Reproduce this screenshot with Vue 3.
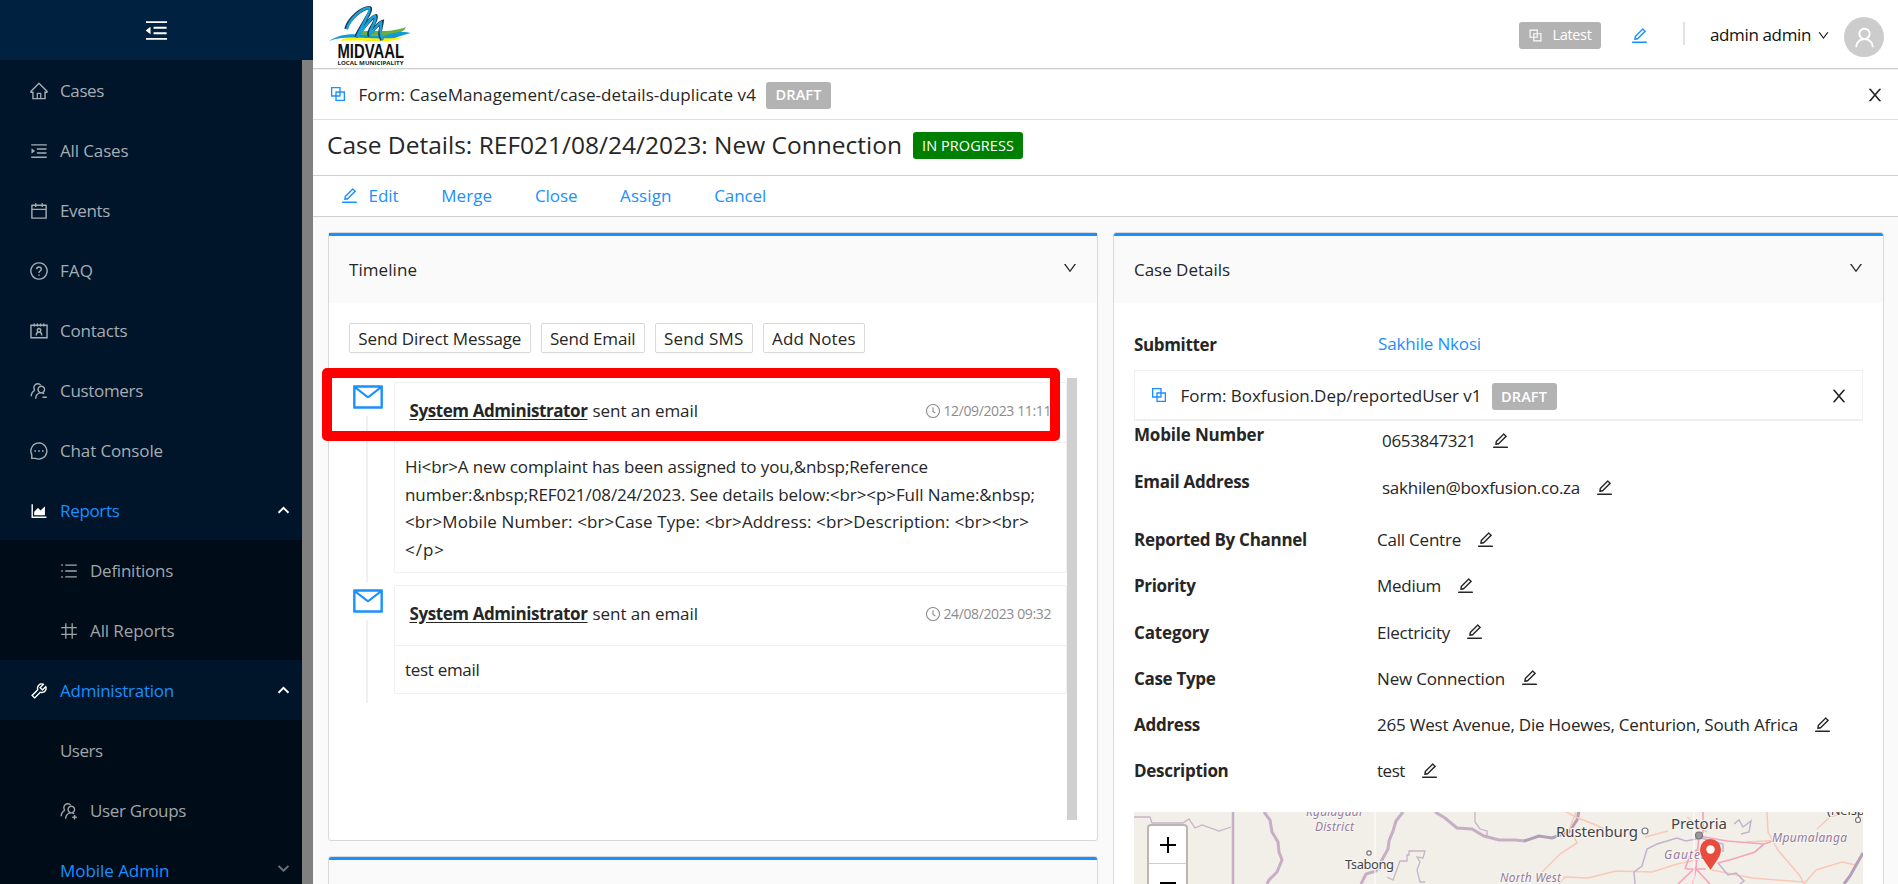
<script setup>
import { h } from 'vue'

const paths = {
  fold: 'M408 442h480c4.4 0 8-3.6 8-8v-56c0-4.4-3.6-8-8-8H408c-4.4 0-8 3.6-8 8v56c0 4.4 3.6 8 8 8zm-8 204c0 4.4 3.6 8 8 8h480c4.4 0 8-3.6 8-8v-56c0-4.4-3.6-8-8-8H408c-4.4 0-8 3.6-8 8v56zm504-486H120c-4.4 0-8 3.6-8 8v56c0 4.4 3.6 8 8 8h784c4.4 0 8-3.6 8-8v-56c0-4.4-3.6-8-8-8zm0 632H120c-4.4 0-8 3.6-8 8v56c0 4.4 3.6 8 8 8h784c4.4 0 8-3.6 8-8v-56c0-4.4-3.6-8-8-8zM115.4 518.9L271.7 642c5.8 4.6 14.4.5 14.4-6.9V388.9c0-7.4-8.5-11.5-14.4-6.9L115.4 505.1a8.74 8.74 0 000 13.8z',
  unfold: 'M408 442h480c4.4 0 8-3.6 8-8v-56c0-4.4-3.6-8-8-8H408c-4.4 0-8 3.6-8 8v56c0 4.4 3.6 8 8 8zm-8 204c0 4.4 3.6 8 8 8h480c4.4 0 8-3.6 8-8v-56c0-4.4-3.6-8-8-8H408c-4.4 0-8 3.6-8 8v56zm504-486H120c-4.4 0-8 3.6-8 8v56c0 4.4 3.6 8 8 8h784c4.4 0 8-3.6 8-8v-56c0-4.4-3.6-8-8-8zm0 632H120c-4.4 0-8 3.6-8 8v56c0 4.4 3.6 8 8 8h784c4.4 0 8-3.6 8-8v-56c0-4.4-3.6-8-8-8zM142.4 642.1L298.7 519a8.84 8.84 0 000-13.9L142.4 381.9c-5.8-4.6-14.4-.5-14.4 6.9v246.3a8.9 8.9 0 0014.4 7z',
  home: 'M946.5 505L560.1 118.8l-25.9-25.9a31.5 31.5 0 00-44.4 0L77.5 505a63.9 63.9 0 00-18.8 46c.4 35.2 29.7 63.3 64.9 63.3h42.5V940h691.8V614.3h43.4c17.1 0 33.2-6.7 45.3-18.8a63.6 63.6 0 0018.7-45.3c0-17-6.7-33.1-18.8-45.2zM568 868H456V664h112v204zm217.9-325.7V868H632V640c0-22.1-17.9-40-40-40H432c-22.1 0-40 17.9-40 40v228H238.1V542.3h-96l370-369.7 23.1 23.1L882 542.3h-96.1z',
  calendar: 'M880 184H712v-64c0-4.4-3.6-8-8-8h-56c-4.4 0-8 3.6-8 8v64H384v-64c0-4.4-3.6-8-8-8h-56c-4.4 0-8 3.6-8 8v64H144c-17.7 0-32 14.3-32 32v664c0 17.7 14.3 32 32 32h736c17.7 0 32-14.3 32-32V216c0-17.7-14.3-32-32-32zm-40 656H184V460h656v380zM184 392V256h128v48c0 4.4 3.6 8 8 8h56c4.4 0 8-3.6 8-8v-48h256v48c0 4.4 3.6 8 8 8h56c4.4 0 8-3.6 8-8v-48h128v136H184z',
  chart: 'M888 792H200V168c0-4.4-3.6-8-8-8h-56c-4.4 0-8 3.6-8 8v688c0 4.4 3.6 8 8 8h752c4.4 0 8-3.6 8-8v-56c0-4.4-3.6-8-8-8zm-616-64h536c4.4 0 8-3.6 8-8V284c0-7.2-8.7-10.7-13.7-5.7L592 488.6l-125.4-124a8.03 8.03 0 00-11.3 0l-189 189.6a7.87 7.87 0 00-2.3 5.6V720c0 4.4 3.6 8 8 8z',
  tool: 'M876.6 239.5c-.5-.9-1.2-1.8-2-2.5-5-5-13.1-5-18.1 0L684.2 409.3l-67.9-67.9L788.7 169c.8-.8 1.4-1.6 2-2.5 3.6-6.1 1.6-13.9-4.5-17.5-98.2-58-226.8-44.7-311.3 39.7-67 67-89.2 162-66.5 247.4l-293 293c-3 3-2.8 7.9.3 11l169.7 169.7c3.1 3.1 8.1 3.3 11 .3l292.9-292.9c85.5 22.8 180.5.7 247.6-66.4 84.4-84.5 97.7-213.1 39.7-311.3zM786 499.8c-58.1 58.1-145.3 69.3-214.6 33.6l-8.8 8.8-.1-.1-274 274.1-79.2-79.2 230.1-230.1s0 .1.1.1l52.8-52.8c-35.7-69.3-24.5-156.5 33.6-214.6a184.2 184.2 0 01144-53.5L537 318.9a32.05 32.05 0 000 45.3l124.5 124.5a32.05 32.05 0 0045.3 0l132.8-132.8c3.7 51.8-14.4 104.8-53.6 143.9z',
  edit: 'M257.7 752c2 0 4-.2 6-.5L431.9 722c2-.4 3.9-1.3 5.3-2.8l423.9-423.9a9.96 9.96 0 000-14.1L694.9 114.9c-1.9-1.9-4.4-2.9-7.1-2.9s-5.2 1-7.1 2.9L256.8 538.8c-1.5 1.5-2.4 3.3-2.8 5.3l-29.5 168.2a33.5 33.5 0 009.4 29.8c6.6 6.4 14.9 9.9 23.8 9.9zm67.4-174.4L687.8 215l73.3 73.3-362.7 362.6-88.9 15.7 15.6-89zM880 836H144c-17.7 0-32 14.3-32 32v36c0 4.4 3.6 8 8 8h784c4.4 0 8-3.6 8-8v-36c0-17.7-14.3-32-32-32z',
  block: 'M856 376H648V168c0-8.8-7.2-16-16-16H168c-8.8 0-16 7.2-16 16v464c0 8.8 7.2 16 16 16h208v208c0 8.8 7.2 16 16 16h464c8.8 0 16-7.2 16-16V392c0-8.8-7.2-16-16-16zm-480 16v188H220V220h360v156H392c-8.8 0-16 7.2-16 16zm204 52v136H444V444h136zm224 360H444V648h188c8.8 0 16-7.2 16-16V444h156v360z',
  down: 'M884 256h-75c-5.1 0-9.9 2.5-12.9 6.6L512 654.2 227.9 262.6c-3-4.1-7.8-6.6-12.9-6.6h-75c-6.5 0-10.3 7.4-6.5 12.7l352.6 486.1c12.8 17.6 39 17.6 51.7 0l352.6-486.1c3.9-5.3.1-12.7-6.4-12.7z',
  close: 'M563.8 512l262.5-312.9c4.4-5.2.7-13.1-6.1-13.1h-79.8c-4.7 0-9.2 2.1-12.3 5.7L511.6 449.8 295.1 191.7c-3-3.6-7.5-5.7-12.3-5.7H203c-6.8 0-10.5 7.9-6.1 13.1L459.4 512 196.9 824.9A7.95 7.95 0 00203 838h79.8c4.7 0 9.2-2.1 12.3-5.7l216.5-258.1 216.5 258.1c3 3.6 7.5 5.7 12.3 5.7h79.8c6.8 0 10.5-7.9 6.1-13.1L563.8 512z',
  mail: 'M928 160H96c-17.7 0-32 14.3-32 32v640c0 17.7 14.3 32 32 32h832c17.7 0 32-14.3 32-32V192c0-17.7-14.3-32-32-32zm-40 110.8V792H136V270.8l-27.6-21.5 39.3-50.5 42.8 33.3h643.1l42.8-33.3 39.3 50.5-27.7 21.5zM833.6 232L512 482 190.4 232l-42.8-33.3-39.3 50.5 27.6 21.5 341.6 265.6a55.99 55.99 0 0068.7 0L888 270.8l27.6-21.5-39.3-50.5-42.7 33.2z',
  user: 'M858.5 763.6a374 374 0 00-80.6-119.5 375.63 375.63 0 00-119.5-80.6c-.4-.2-.8-.3-1.2-.5C719.5 518 760 444.7 760 362c0-137-111-248-248-248S264 225 264 362c0 82.7 40.5 156 102.8 201.1-.4.2-.8.3-1.2.5-44.8 18.9-85 46-119.5 80.6a375.63 375.63 0 00-80.6 119.5A371.7 371.7 0 00136 901.8a8 8 0 008 8.2h60c4.4 0 7.9-3.5 8-7.8 2-77.2 33-149.5 87.8-204.3 56.7-56.7 132-87.9 212.2-87.9s155.5 31.2 212.2 87.9C779 752.7 810 825 812 902.2c.1 4.4 3.6 7.8 8 7.8h60a8 8 0 008-8.2c-1-47.8-10.9-94.3-29.5-138.2zM512 534c-45.9 0-89.1-17.9-121.6-50.4S340 407.9 340 362c0-45.9 17.9-89.1 50.4-121.6S466.1 190 512 190s89.1 17.9 121.6 50.4S684 316.1 684 362c0 45.9-17.9 89.1-50.4 121.6S557.9 534 512 534z',
  list: 'M320 176h592v68H320zM320 478h592v68H320zM320 780h592v68H320zM112 168h80v80h-80zM112 472h80v80h-80zM112 776h80v80h-80z',
  number: 'M112 312h800v64H112zM112 648h800v64H112zM316 112h66v800h-66zM642 112h66v800h-66z',
}

const strokes = {
  question: 'M512 98a414 414 0 1 0 .1 0zM392 420c0-72 52-116 120-116s120 46 120 112c0 84-120 100-120 170v34M512 690v64',
  contacts: 'M100 216h824v640H100zM270 130v150M430 130v150M594 130v150M754 130v150M512 380a90 90 0 1 0 .1 0zM372 740c0-110 60-176 140-176s140 66 140 176',
  message: 'M512 98A414 414 0 0 0 142 698V890H330A414 414 0 1 0 512 98zM318 470v84M512 470v84M706 470v84M276 512h84M470 512h84M664 512h84',
  groupMinus: 'M300 480A185 185 0 1 1 600 210M110 780C120 620 190 530 300 480M630 270a168 168 0 1 0 .1 0zM340 910c10-170 120-300 290-300 60 0 110 15 150 45M690 830h220',
  groupPlus: 'M300 480A185 185 0 1 1 600 210M110 780C120 620 190 530 300 480M630 270a168 168 0 1 0 .1 0zM340 910c10-170 120-300 290-300 60 0 110 15 150 45M680 830h230M795 715v230',
  clock: 'M512 98a414 414 0 1 0 .1 0zM512 270v270l150 110',
  caretUp: 'M120 690L512 310L904 690',
  caretDown: 'M120 310L512 690L904 310',
}

const Icon = (props) =>
  h('svg', { class: 'icon', viewBox: '0 0 1024 1024' }, [
    paths[props.name]
      ? h('path', { d: paths[props.name], fill: 'currentColor' })
      : h('path', {
          d: strokes[props.name],
          fill: 'none',
          stroke: 'currentColor',
          'stroke-width': props.name.startsWith('caret') ? 150 : 72,
        }),
  ])
Icon.props = ['name']

// Tracks a single-line label so that it spans the given width.
const vFit = {
  mounted(el, { value }) {
    const gap = value - el.getBoundingClientRect().width
    el.style.letterSpacing = `${gap / el.textContent.length}px`
  },
}

const menu = [
  { icon: 'home', label: 'Cases', w: 44 },
  { icon: 'unfold', label: 'All Cases', w: 68.5 },
  { icon: 'calendar', label: 'Events', w: 50 },
  { icon: 'question', label: 'FAQ', w: 33 },
  { icon: 'contacts', label: 'Contacts', w: 67.5 },
  { icon: 'groupMinus', label: 'Customers', w: 83 },
  { icon: 'message', label: 'Chat Console', w: 103 },
  { icon: 'chart', label: 'Reports', w: 59.5, open: true },
  { icon: 'list', label: 'Definitions', w: 83, sub: true },
  { icon: 'number', label: 'All Reports', w: 84.5, sub: true },
  { icon: 'tool', label: 'Administration', w: 114, open: true },
  { label: 'Users', w: 42.5, sub: true, bare: true },
  { icon: 'groupPlus', label: 'User Groups', w: 96, sub: true },
  { label: 'Mobile Admin', w: 109.5, sub: true, bare: true, closed: true },
]

const actions = [
  { label: 'Edit', w: 30, icon: 'edit' },
  { label: 'Merge', w: 51 },
  { label: 'Close', w: 42.5 },
  { label: 'Assign', w: 51.5 },
  { label: 'Cancel', w: 52 },
]

const sends = [
  { label: 'Send Direct Message', w: 163 },
  { label: 'Send Email', w: 85.5 },
  { label: 'Send SMS', w: 79.5 },
  { label: 'Add Notes', w: 83.5 },
]

const mails = [
  {
    time: '12/09/2023 11:11',
    lines: [
      { t: 'Hi<br>A new complaint has been assigned to you,&nbsp;Reference', w: 523 },
      { t: 'number:&nbsp;REF021/08/24/2023. See details below:<br><p>Full Name:&nbsp;', w: 630 },
      { t: '<br>Mobile Number: <br>Case Type: <br>Address: <br>Description: <br><br>', w: 624 },
      { t: '</p>', w: 40 },
    ],
  },
  { time: '24/08/2023 09:32', lines: [{ t: 'test email', w: 74.5 }] },
]

const contact = [
  { label: 'Mobile Number', lw: 130, value: '0653847321', w: 94 },
  { label: 'Email Address', lw: 115.5, value: 'sakhilen@boxfusion.co.za', w: 198 },
]

const fields = [
  { label: 'Reported By Channel', lw: 173, value: 'Call Centre', w: 84 },
  { label: 'Priority', lw: 61.5, value: 'Medium', w: 64 },
  { label: 'Category', lw: 75, value: 'Electricity', w: 73 },
  { label: 'Case Type', lw: 81.5, value: 'New Connection', w: 128 },
  { label: 'Address', lw: 66, value: '265 West Avenue, Die Hoewes, Centurion, South Africa', w: 421 },
  { label: 'Description', lw: 94.5, value: 'test', w: 28 },
]
</script>

<template>
  <div class="page">
    <aside class="side">
      <div class="side-top"><Icon name="fold" /></div>
      <div class="side-body">
        <nav class="menu">
          <div
            v-for="m in menu"
            :key="m.label"
            class="item"
            :class="{ sub: m.sub, open: m.open, closed: m.closed, bare: m.bare }"
          >
            <Icon v-if="m.icon" :name="m.icon" />
            <span v-fit="m.w" class="t">{{ m.label }}</span>
            <span v-if="m.open || m.closed" class="caret">
              <Icon :name="m.open ? 'caretUp' : 'caretDown'" />
            </span>
          </div>
        </nav>
        <div class="side-scroll"></div>
      </div>
    </aside>

    <main class="main">
      <header class="top">
        <svg class="logo" viewBox="0 0 84 60" width="84" height="60">
          <path d="M27 34C42 29 55 36 78 28C75 36 58 38 34 36z" fill="#6aae3d" />
          <path d="M1 42C22 28 45 41 62 35C72 32 78 33 83 34C68 37 64 43 47 42C28 41 20 35 1 42z" fill="#0f9bd7" />
          <path d="M15 40C30 36 40 42 76 38C58 46 40 40 12 42z" fill="#fff100" />
          <path d="M18 30C21 19 35 8 42 9C45 11 32 28 28 38C36 28 43 18 48 17C50 21 40 31 41 35C46 31 49 25 54 23C53 30 50 35 54 41" fill="none" stroke="#163a52" stroke-width="3.6" />
          <path d="M19 30C22 19 35 8.500 41 9C44 11 33 28 29 38C37 29 43 17 47 17C50 21 41 31 42 35C47 31 49 25 53 23.500C53 30 51 35 55 41" fill="none" stroke="#1aa3dc" stroke-width="2.400" />
          <text x="9.500" y="58.500" class="logo-name" textLength="66.500" lengthAdjust="spacingAndGlyphs">MIDVAAL</text>
          <text x="9.500" y="65.500" class="logo-sub" textLength="66" lengthAdjust="spacingAndGlyphs">LOCAL MUNICIPALITY</text>
        </svg>
        <div class="top-right">
          <span class="tag latest"><Icon name="block" /><span v-fit="39" class="t">Latest</span></span>
          <Icon name="edit" class="blue top-edit" />
          <i class="rule"></i>
          <span v-fit="101" class="t admin">admin admin</span>
          <Icon name="down" class="top-down" />
          <span class="avatar"><Icon name="user" /></span>
        </div>
      </header>

      <div class="form-bar">
        <Icon name="block" class="blue" />
        <span v-fit="397.5" class="t name">Form: CaseManagement/case-details-duplicate v4</span>
        <span class="tag draft"><span v-fit="46" class="t">DRAFT</span></span>
        <Icon name="close" class="x" />
      </div>

      <div class="title-bar">
        <span v-fit="575" class="t title">Case Details: REF021/08/24/2023: New Connection</span>
        <span class="tag progress"><span v-fit="92" class="t">IN PROGRESS</span></span>
      </div>

      <div class="toolbar">
        <span v-for="a in actions" :key="a.label" class="action">
          <Icon v-if="a.icon" :name="a.icon" />
          <span v-fit="a.w" class="t">{{ a.label }}</span>
        </span>
      </div>

      <div class="content">
        <div class="col">
          <section class="panel timeline">
            <div class="panel-head"><span v-fit="68" class="t">Timeline</span><Icon name="down" /></div>
            <div class="panel-body">
              <div class="sends">
                <span v-for="s in sends" :key="s.label" class="btn"><span v-fit="s.w" class="t">{{ s.label }}</span></span>
              </div>
              <div class="feed">
                <div class="entries">
                  <div v-for="m in mails" :key="m.time" class="entry">
                    <div class="rail"><Icon name="mail" /><i></i></div>
                    <div class="mail">
                      <div class="mail-head">
                        <b v-fit="178" class="t">System Administrator</b>
                        <span v-fit="105.5" class="t sent">sent an email</span>
                        <Icon name="clock" />
                        <span v-fit="107.5" class="t time">{{ m.time }}</span>
                      </div>
                      <div class="mail-body">
                        <div v-for="l in m.lines" :key="l.t" class="line"><span v-fit="l.w" class="t">{{ l.t }}</span></div>
                      </div>
                    </div>
                  </div>
                </div>
                <div class="feed-scroll"></div>
                <div class="highlight"></div>
              </div>
            </div>
          </section>
          <section class="panel next"></section>
        </div>

        <section class="panel details">
          <div class="panel-head"><span v-fit="96" class="t">Case Details</span><Icon name="down" /></div>
          <div class="panel-body">
            <div class="row submitter">
              <b><span v-fit="82.5" class="t">Submitter</span></b>
              <span v-fit="103" class="t link">Sakhile Nkosi</span>
            </div>
            <div class="form-box">
              <Icon name="block" class="blue" />
              <span v-fit="301" class="t name">Form: Boxfusion.Dep/reportedUser v1</span>
              <span class="tag draft"><span v-fit="46" class="t">DRAFT</span></span>
              <Icon name="close" class="x" />
            </div>
            <div class="contact">
              <div v-for="f in contact" :key="f.label" class="row">
                <b><span v-fit="f.lw" class="t">{{ f.label }}</span></b>
                <span class="value"><span v-fit="f.w" class="t">{{ f.value }}</span><Icon name="edit" /></span>
              </div>
            </div>
            <div class="fields">
              <div v-for="f in fields" :key="f.label" class="row">
                <b><span v-fit="f.lw" class="t">{{ f.label }}</span></b>
                <span class="value"><span v-fit="f.w" class="t">{{ f.value }}</span><Icon name="edit" /></span>
              </div>
            </div>
            <div class="map">
              <svg viewBox="0 0 729 72" width="729" height="72">
                <rect width="729" height="72" fill="#f2efe9" />
                <g fill="none" stroke="#c9b3c9" stroke-width="1.300">
                  <path d="M0 5h16l2 6h31l6-4 6 9 7-3 17 6 12-4" />
                  <path d="M341 0v10l5 7 7 2v5" />
                  <path d="M253 65l6 3 7-19h7v-6h2v-4h16l-2 7-6-1 3 5-3 8 3 12h5" />
                </g>
                <g fill="none" stroke="#bfa5bf" stroke-width="3" opacity=".85">
                  <path d="M99 0v72" stroke-width="2.500" />
                  <path d="M130 0l6 8 2 12 6 10 1 10 3 8-5 12-8 8-2 4" />
                  <path d="M269 0l-7 9-3 10-4 10-1 8-5 9-7 13-10 3-5 10" />
                  <path d="M301 0l10 6 12 10 15 1 12 7 15 4h16l10 1" />
                  <path d="M390 29l15-5 13 2 17-6 8-12 2-9" stroke="#a992ac" />
                </g>
                <g fill="none" stroke="#f9c8b6" stroke-width="1.500">
                  <path d="M432 0l12 6 18 7 8 4M511 25l23-6M442 0l-6 16 7 15-17 11-18 18M425 72l6-7 23 1 28-7 36 1 25-8 24-5M553 5l12 10 8 5M633 0l1 20 10 18 22 26 4 8M578 58l40 8 52 4M670 72l12-14 26-8 14 3M683 17l13-12 16-5M612 30l80-4" />
                </g>
                <g fill="none" stroke="#f4a5bb" stroke-width="1.700">
                  <path d="M565 24l28 5 37 3 15-5M630 32l-9 8-22 7-15 4M565 24l-3 32-3 16M569 0v21M562 55l-18 17M562 57l14 15M552 57h20M551 57l5-14 8-6" />
                </g>
                <path d="M589 40v-8l-22-6-15 3-9-3-20 6-10 5-5 17-8 6 1 12M584 51l10 12 8-2 8 8-4 3M600 12l5-4 4 7 8-6-2 11-8 2" fill="none" stroke="#c4b1ce" stroke-width="1.500" />
                <path d="M729 41l-8 14-5 9-6 8" fill="none" stroke="#b59fb8" stroke-width="3" />
                <path d="M241 0v72M560 0v72" stroke="#fff" />
                <g class="region">
                  <text x="172" y="4" textLength="56">Kgalagadi</text>
                  <text x="181" y="19" textLength="39">District</text>
                  <text x="366" y="69.500" textLength="61">North West</text>
                  <text x="530" y="47" textLength="52">Gauteng</text>
                  <text x="638" y="30" textLength="75">Mpumalanga</text>
                </g>
                <g class="city">
                  <text x="211" y="57" textLength="49">Tsabong</text>
                  <text x="422" y="25" class="big" textLength="82">Rustenburg</text>
                  <text x="537" y="17" class="big" textLength="56">Pretoria</text>
                  <text x="693" y="3" textLength="62">(Nelspruit)</text>
                </g>
                <g fill="#fff" stroke="#777" stroke-width="1.200">
                  <circle cx="235" cy="41" r="2.200" />
                  <circle cx="511" cy="19" r="3" />
                  <circle cx="565" cy="23.500" r="3.500" fill="#999" />
                  <circle cx="724" cy="8" r="2.500" />
                </g>
                <path d="M576.500 58c-4-7-10.500-13-10.500-20.500a10.500 10.500 0 0 1 21 0C587 45 580.500 51 576.500 58z" fill="#e74c3c" />
                <circle cx="576.500" cy="37.500" r="4.200" fill="#fff" />
              </svg>
              <div class="zoom"><span class="plus"></span><span class="minus"></span></div>
            </div>
          </div>
        </section>
      </div>
    </main>
  </div>
</template>

<style>
html,
body {
  overflow: hidden;
}
</style>

<style scoped>
.page {
  display: flex;
  height: 884px;
  overflow: hidden;
  font-family: "Open Sans", "Noto Sans", sans-serif;
  font-size: 17px;
  line-height: 24px;
  color: #262626;
  background: #fafafa;
}
.page * {
  box-sizing: border-box;
}
.t {
  display: inline-block;
  white-space: pre;
  flex: none;
}
.page :deep(.icon) {
  display: block;
  flex: none;
  width: 19px;
  height: 19px;
}
.blue {
  color: #1890ff;
}
.side {
  width: 313px;
  flex: none;
}
.side-top {
  height: 60px;
  background: #002140;
  color: #fff;
  padding: 17px 0 0 143px;
}
.side-top :deep(.icon) {
  width: 27px;
  height: 27px;
}
.side-body {
  display: flex;
  height: 824px;
}
.menu {
  width: 302px;
  background: #001529;
  overflow: hidden;
}
.side-scroll {
  width: 11px;
  background: #808080;
}
.item {
  display: flex;
  align-items: center;
  gap: 11px;
  height: 60px;
  padding: 1px 12px 0 29px;
  color: #a6adb4;
}
.item > :deep(.icon) {
  width: 20px;
  height: 20px;
}
.item.sub {
  padding-left: 59px;
  background: #000c17;
  color: #a1a5a9;
}
.item.bare {
  padding-left: 60px;
}
.item.open,
.item.closed {
  color: #1890ff;
}
.item.open > :deep(.icon) {
  color: #fff;
}
.caret {
  margin-left: auto;
  color: #fff;
}
.closed .caret {
  color: #6f7479;
  margin-top: -4px;
}
.caret :deep(.icon) {
  width: 13px;
  height: 13px;
}
.main {
  width: 1585px;
  display: flex;
  flex-direction: column;
}
.top {
  display: flex;
  justify-content: space-between;
  height: 69px;
  background: #fff;
  border-bottom: 1px solid #d0d0d0;
  flex: none;
}
.logo {
  margin: -1px 0 0 15px;
  overflow: visible;
}
.logo-name {
  font: bold 21px "Liberation Sans", sans-serif;
  fill: #111;
}
.logo-sub {
  font: bold 6px "Open Sans", sans-serif;
  fill: #222;
}
.top-right {
  display: flex;
  align-items: center;
  height: 70px;
  padding-right: 14px;
}
.tag {
  display: flex;
  align-items: center;
  justify-content: center;
  height: 27px;
  border-radius: 3px;
  background: #b3b3b3;
  color: #fff;
  font-size: 14.5px;
  flex: none;
}
.latest {
  width: 82px;
  gap: 9px;
  padding-right: 2px;
}
.latest :deep(.icon) {
  width: 17px;
  height: 17px;
}
.top-edit {
  margin-left: 29px;
}
.page .top-edit {
  width: 19px;
  height: 19px;
}
.rule {
  width: 2px;
  height: 23px;
  margin: -3px 25px 0 34px;
  background: #e3e3e3;
}
.admin {
  color: #111;
}
.page .top-down {
  width: 13px;
  height: 13px;
  margin: 0 14px 0 6px;
  color: #111;
}
.avatar {
  display: flex;
  align-items: center;
  justify-content: center;
  width: 40px;
  height: 40px;
  margin-top: 4px;
  border-radius: 50%;
  background: #ccc;
  color: #fff;
}
.avatar :deep(.icon) {
  width: 25px;
  height: 25px;
}
.form-bar {
  display: flex;
  align-items: center;
  height: 51px;
  padding: 0 13.500px 0 15px;
  background: #fff;
  border-top: 1px solid #f0f0f0;
  border-bottom: 1px solid #dedede;
  flex: none;
}
.form-bar > .blue,
.form-box > .blue {
  margin-top: -2px;
}
.page .form-bar > .blue,
.page .form-box > .blue {
  width: 20px;
  height: 20px;
}
.form-bar .name,
.form-box .name {
  margin: 0 10px 0 10.500px;
}
.form-box .name {
  margin-left: 11.500px;
}
.form-bar .draft {
  margin-top: 1px;
}
.draft {
  width: 65px;
  font-weight: 600;
}
.x {
  margin-left: auto;
}
.page .x {
  width: 20px;
  height: 20px;
}
.title-bar {
  display: flex;
  align-items: center;
  height: 56px;
  padding: 0 0 6px 14px;
  background: #fff;
  border-bottom: 1px solid #d0d0d0;
  flex: none;
}
.title {
  font-size: 24.5px;
  line-height: 36px;
  margin-right: 11px;
}
.progress {
  width: 110px;
  margin-top: 2px;
  background: #008000;
}
.toolbar {
  display: flex;
  align-items: center;
  gap: 42.700px;
  height: 41px;
  padding: 0 0 0 27px;
  background: #fff;
  border-bottom: 1px solid #d0d0d0;
  color: #1890ff;
  flex: none;
}
.action {
  display: flex;
  align-items: center;
  gap: 9.500px;
}
.action :deep(.icon) {
  margin-top: -1px;
}
.content {
  display: flex;
  gap: 15px;
  padding: 15px 14px 0 15px;
}
.col {
  width: 770px;
}
.panel {
  border: 1px solid #d9d9d9;
  border-radius: 3px;
  background: #fff;
  overflow: hidden;
}
.timeline {
  height: 609px;
}
.next {
  height: 80px;
  margin-top: 15px;
  background: #fafafa;
}
.next::before {
  content: "";
  display: block;
  height: 3px;
  background: #1890ff;
}
.timeline,
.timeline .panel-body {
  overflow: visible;
}
.details {
  width: 771px;
  height: 700px;
}
.panel-head {
  display: flex;
  align-items: center;
  justify-content: space-between;
  height: 70px;
  padding: 0 19.500px 0 20px;
  border-top: 3px solid #1890ff;
  background: #fafafa;
}
.panel-head :deep(.icon) {
  width: 16px;
  height: 16px;
  margin-top: -3px;
}
.panel-body {
  padding: 0 20px;
}
.sends {
  display: flex;
  gap: 10px;
  padding-top: 20px;
}
.btn {
  height: 30px;
  padding: 3px 8.300px 0;
  border: 1px solid #d9d9d9;
  border-radius: 2px;
  box-shadow: 0 2px 0 rgba(0, 0, 0, 0.015);
}
.feed {
  position: relative;
  display: flex;
  height: 442px;
  margin-top: 25px;
}
.entries {
  width: 718px;
  padding-top: 4px;
}
.entry {
  display: flex;
  margin-bottom: 12px;
}
.rail {
  width: 45px;
  display: flex;
  flex-direction: column;
  align-items: center;
  color: #1890ff;
}
.rail :deep(.icon) {
  width: 34px;
  height: 34px;
  margin-left: -8px;
  margin-top: -2px;
}
.entry + .entry .rail :deep(.icon) {
  margin-top: -1px;
}
.rail i {
  width: 2px;
  margin: 2px 10px -9px 0;
  flex: 1;
  background: #f0f0f0;
}
.mail {
  width: 673px;
  border: 1px solid #f0f0f0;
  border-radius: 2px;
}
.mail-head {
  display: flex;
  align-items: center;
  height: 60px;
  padding: 0 15px 4px 14.500px;
  border-bottom: 1px solid #f0f0f0;
}
.mail-head b {
  font-weight: 700;
  text-decoration: underline;
  text-underline-offset: 2px;
}
.sent {
  margin: 0 auto 0 5px;
}
.mail-head :deep(.icon) {
  width: 16px;
  height: 16px;
  color: #8c8c8c;
}
.time {
  margin-left: 3px;
  font-size: 14px;
  color: #8c8c8c;
}
.mail-body {
  padding: 10px 10px 9px;
}
.line {
  height: 27.500px;
  line-height: 27.500px;
}
.feed-scroll {
  width: 10px;
  background: #d0d0d0;
}
.highlight {
  position: absolute;
  left: -27px;
  top: -10px;
  width: 738px;
  height: 73px;
  border: 10px solid #f00;
  border-radius: 5px;
}
.row {
  display: flex;
}
.row b {
  width: 243px;
  flex: none;
  font-weight: 700;
}
.submitter {
  height: 67px;
  padding-top: 30px;
}
.link {
  margin: -1px 0 0 1px;
  color: #1890ff;
}
.form-box {
  display: flex;
  align-items: center;
  height: 51px;
  padding: 1px 13.500px 0 14px;
  border: 1px solid #f0f0f0;
  border-bottom: 2px solid #eee;
}
.form-box .draft {
  margin-top: 2px;
}
.value {
  display: flex;
  align-items: center;
  gap: 15px;
}
.value :deep(.icon) {
  margin-top: -2px;
}
.contact .row {
  height: 47px;
}
.contact {
  padding-top: 2px;
  height: 107px;
}
.contact .value {
  height: 24px;
  margin: 6px 0 0 5px;
}
.contact .row + .row .value {
  margin-top: 6px;
}
.fields .row {
  height: 46.250px;
}
.fields .value {
  height: 24px;
}
.map {
  position: relative;
  height: 72px;
  margin-top: 6px;
}
.map svg {
  display: block;
}
.region {
  font: italic 12px "Noto Sans", sans-serif;
  fill: #957c9c;
  stroke: #f8f5f2;
  stroke-width: 2px;
  paint-order: stroke;
}
.city {
  font: 13px "Noto Sans", sans-serif;
  fill: #444;
  stroke: #f8f5f2;
  stroke-width: 2px;
  paint-order: stroke;
}
.big {
  font-size: 15px;
}
.zoom {
  position: absolute;
  left: 13px;
  top: 12px;
  width: 41px;
  height: 80px;
  border: 2px solid #bab7b2;
  border-radius: 4px;
  background: #fff;
}
.plus {
  display: block;
  height: 38px;
  border-bottom: 1px solid #ccc;
  background:
    linear-gradient(#000, #000) 11px 18px / 16px 2px no-repeat,
    linear-gradient(#000, #000) 18px 11px / 2px 16px no-repeat;
}
.minus {
  display: block;
  width: 16px;
  height: 3px;
  margin: 18px 0 0 11px;
  background: #000;
}
</style>
